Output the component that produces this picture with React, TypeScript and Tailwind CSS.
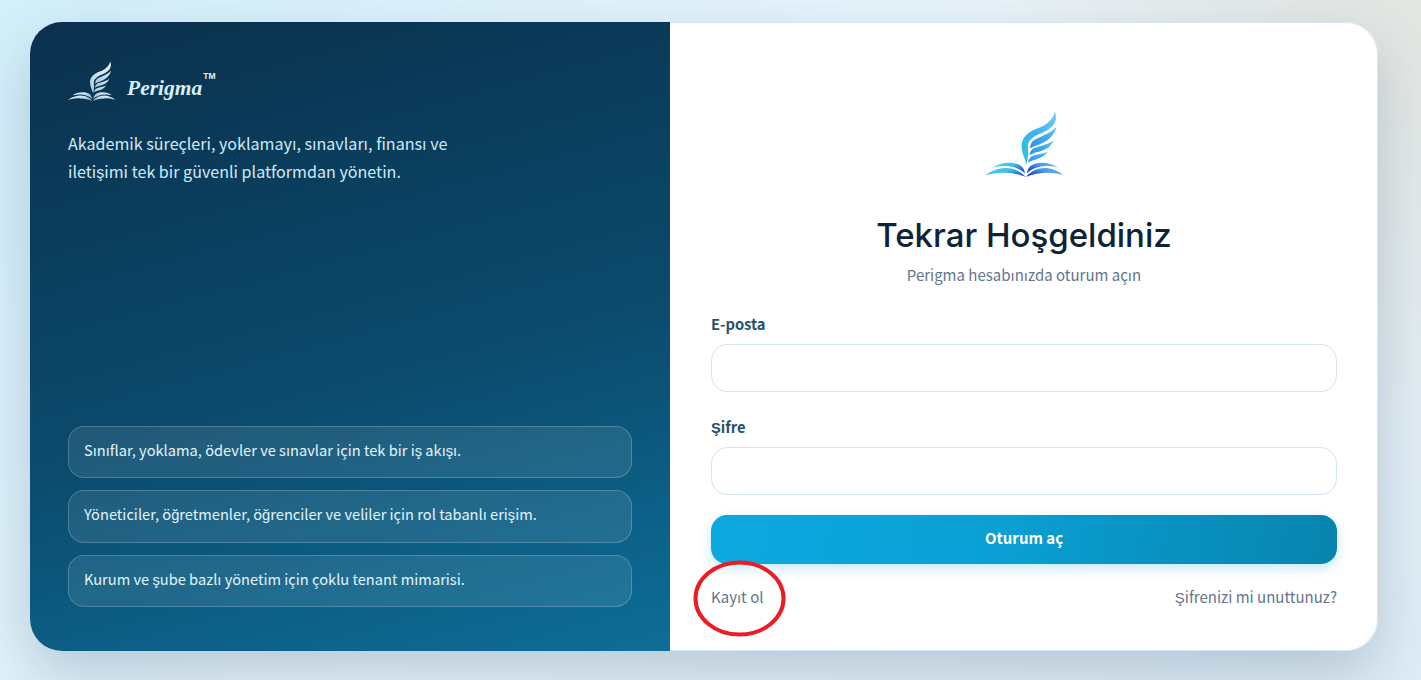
const Logo = ({ small }: { small?: boolean }) => {
  const id = small ? "s" : "b";
  return (
    <svg
      viewBox="64 46 241 200"
      className={small ? "h-[40px] w-[49px]" : "h-[66px] w-[80px]"}
    >
      <defs>
        <linearGradient id={id + "w"} x1="0.9" y1="0" x2="0.1" y2="1">
          <stop offset="0" stopColor={small ? "#eef7fb" : "#6ccaf6"} />
          <stop offset="0.5" stopColor={small ? "#cfe4ee" : "#3eb0ee"} />
          <stop offset="1" stopColor={small ? "#a9cde0" : "#2cc4dc"} />
        </linearGradient>
        <linearGradient id={id + "f"} x1="1" y1="0" x2="0" y2="1">
          <stop offset="0" stopColor={small ? "#dcedf5" : "#5cc0f5"} />
          <stop offset="1" stopColor={small ? "#9dc4d9" : "#2a8fe8"} />
        </linearGradient>
        <linearGradient id={id + "l"} x1="0" y1="0" x2="1" y2="0.6">
          <stop offset="0" stopColor={small ? "#e3f0f6" : "#4ad6ea"} />
          <stop offset="0.55" stopColor={small ? "#c9e0ec" : "#3cbfe8"} />
          <stop offset="1" stopColor={small ? "#8fb6cc" : "#2158d2"} />
        </linearGradient>
        <linearGradient id={id + "r"} x1="1" y1="0" x2="0" y2="0.6">
          <stop offset="0" stopColor={small ? "#e3f0f6" : "#7cc4f4"} />
          <stop offset="0.55" stopColor={small ? "#c9e0ec" : "#4a94e8"} />
          <stop offset="1" stopColor={small ? "#8fb6cc" : "#1f45c8"} />
        </linearGradient>
      </defs>
      <path
        fill={`url(#${id}w)`}
        d="M278 48C272 72 255 88 222 100C198 110 180 124 177 148C176 172 188 190 192 208C198 190 198 170 196 152C197 134 215 122 240 112C262 102 276 92 281 72C282 62 280 54 278 48Z"
      />
      <g fill={`url(#${id}f)`}>
        <path d="M283 94C268 112 240 122 215 134C207 139 203 148 203 160C222 146 268 146 283 94Z" />
        <path d="M275 134C262 148 235 150 213 160C206 164 203 170 201 180C222 166 258 172 275 134Z" />
        <path d="M258 168C245 177 222 175 206 185C201 189 198 195 197 202C216 191 242 192 258 168Z" />
      </g>
      <g fill={`url(#${id}l)`}>
        <path d="M90 217C110 203 145 197 170 209C180 214 186 224 188 236C172 220 150 214 130 213C115 213 103 214 90 217Z" />
        <path d="M66 241C92 221 125 214 150 221C170 227 183 238 189 246C172 238 150 234 130 233C106 232 86 235 66 241Z" />
      </g>
      <g fill={`url(#${id}r)`}>
        <path d="M286 217C268 203 234 197 210 209C200 214 195 224 193 236C208 220 230 214 250 213C264 213 276 214 286 217Z" />
        <path d="M305 241C282 221 252 214 228 221C208 227 197 238 191 246C208 238 230 234 250 233C270 232 290 235 305 241Z" />
      </g>
    </svg>
  );
};

const features = [
  "Sınıflar, yoklama, ödevler ve sınavlar için tek bir iş akışı.",
  "Yöneticiler, öğretmenler, öğrenciler ve veliler için rol tabanlı erişim.",
  "Kurum ve şube bazlı yönetim için çoklu tenant mimarisi.",
];

export default function App() {
  return (
    <div className="relative h-[680px] overflow-hidden bg-[radial-gradient(circle_at_100%_0%,#e3e6e1_0%,rgba(227,230,225,0)_30%),linear-gradient(135deg,#d3f0fb_0%,#eaf4fb_50%,#e0edf6_100%)] px-[30px] py-[22px] font-['Noto_Sans_CJK_SC',sans-serif]">
      <div className="flex h-[629px] w-[1348px] overflow-hidden rounded-[32px] bg-white shadow-[0_24px_60px_rgba(15,50,80,0.22)]">
        <div className="flex w-[640px] flex-col justify-between bg-[linear-gradient(165deg,#0a304c_0%,#0b4a6c_55%,#0d6e98_100%)] pb-[44px] pl-[37px] pr-[38px] pt-[39px]">
          <div>
            <div className="flex items-start">
              <Logo small />
              <span className="ml-[11px] mt-[15px] font-['Liberation_Serif',serif] text-[21.5px] font-bold italic leading-[24px] text-[#d6effb]">
                Perigma
              </span>
              <span className="ml-[1px] mt-[10px] font-['Liberation_Sans',sans-serif] text-[8.5px] font-bold leading-[10px] text-[#e0f2fb]">
                TM
              </span>
            </div>
            <p className="ml-[1px] mt-[28px] w-[400px] text-[16.1px] leading-[28px] text-[#cfe9f6]">
              Akademik süreçleri, yoklamayı, sınavları, finansı ve iletişimi tek bir güvenli platformdan yönetin.
            </p>
          </div>
          <div className="ml-[1px] flex flex-col gap-[12px]">
            {features.map((f) => (
              <div
                key={f}
                className="flex h-[52.5px] items-center rounded-[16px] border border-white/20 bg-white/[0.09] px-[15px] pb-[4px] text-[14.65px] text-[#e2f4fc]"
              >
                {f}
              </div>
            ))}
          </div>
        </div>
        <div className="flex w-[708px] flex-col rounded-r-[32px] border border-l-0 border-[#d3e6f2] pl-[41px] pr-[40px] pt-[88px]">
          <div className="flex justify-center">
            <Logo />
          </div>
          <h1 className="mt-[34px] text-center font-['Inter',sans-serif] text-[33px] font-medium leading-[48px] text-[#0c2338]">
            Tekrar Hoşgeldiniz
          </h1>
          <p className="mt-[4px] text-center text-[15px] leading-[24px] text-[#64748b]">
            Perigma hesabınızda oturum açın
          </p>
          <label className="mt-[25px] text-[14.7px] font-bold leading-[24px] text-[#28506d]">E-posta</label>
          <input className="mt-[8px] h-[48px] rounded-[16px] border border-[#d3e4ee] bg-white outline-none" />
          <label className="mt-[23px] text-[14.7px] font-bold leading-[24px] text-[#28506d]">Şifre</label>
          <input className="mt-[8px] h-[48px] rounded-[16px] border border-[#d3e4ee] bg-white outline-none" />
          <button className="mt-[20px] h-[49px] rounded-[16px] bg-[linear-gradient(100deg,#0ca9e0_0%,#0aa0d4_45%,#0784ae_100%)] pb-[3px] text-[15px] font-bold text-white shadow-[0_4px_12px_rgba(14,165,220,0.25)]">
            Oturum aç
          </button>
          <div className="mt-[21px] flex items-center justify-between text-[15px] leading-[24px] text-[#64748b]">
            <span>Kayıt ol</span>
            <span>Şifrenizi mi unuttunuz?</span>
          </div>
        </div>
      </div>
      <svg className="absolute left-[690px] top-[558px] h-[80px] w-[98px]" viewBox="0 0 98 80" fill="none">
        <ellipse cx="49.5" cy="40.5" rx="44" ry="36" stroke="#ed1c24" strokeWidth="4" />
      </svg>
    </div>
  );
}
